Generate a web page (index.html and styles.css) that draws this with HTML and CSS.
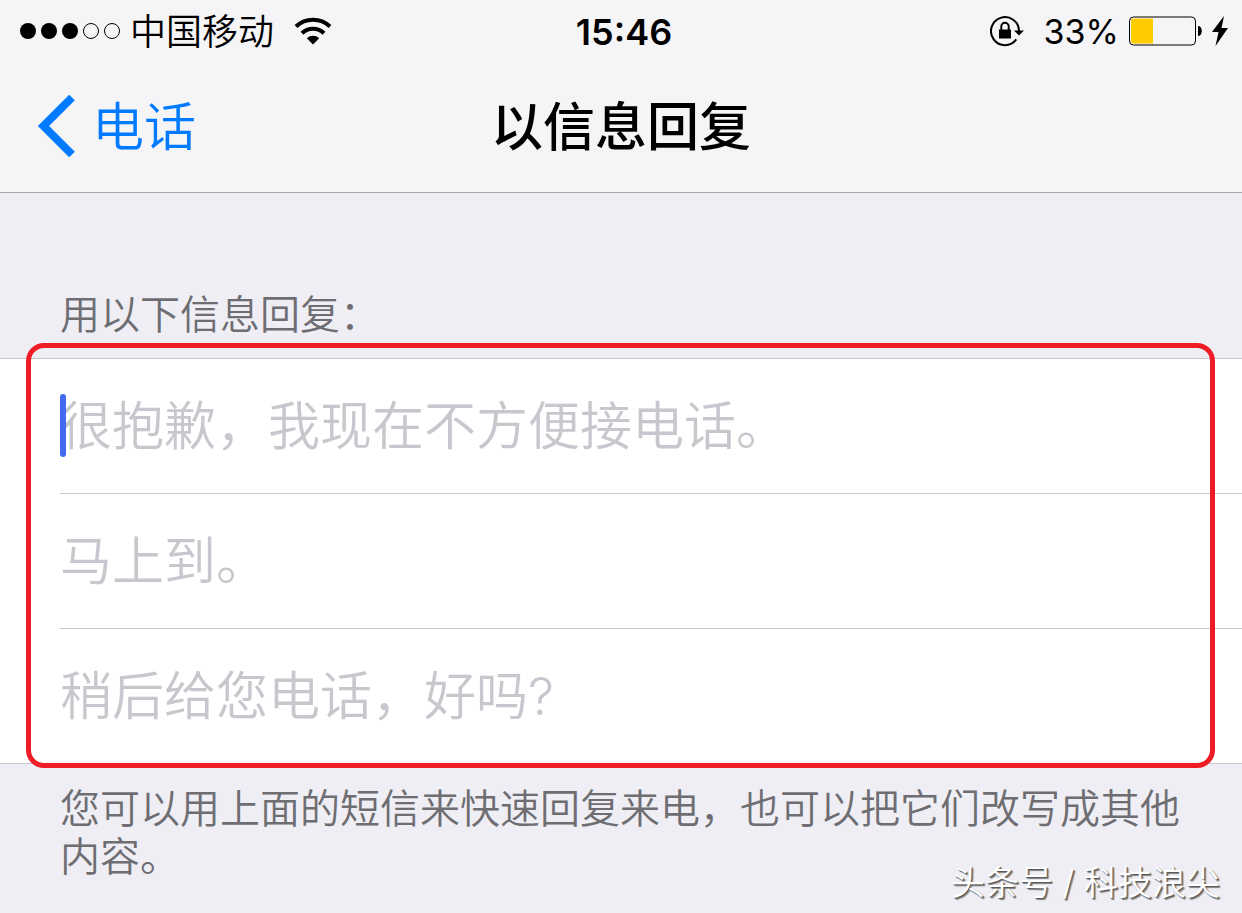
FILE: index.html
```html
<!DOCTYPE html>
<html lang="zh-CN">
<head>
    <meta charset="UTF-8">
    <meta name="viewport" content="width=device-width, initial-scale=1.0">
    <title>以信息回复</title>
    <link rel="stylesheet" href="styles.css">
</head>
<body>
    <header class="top">
        <div class="status-bar">
            <div class="status-left">
                <svg class="signal" width="101" height="18" viewBox="0 0 101 18" aria-hidden="true">
                    <circle cx="8" cy="9" r="8"/>
                    <circle cx="29" cy="9" r="8"/>
                    <circle cx="50" cy="9" r="8"/>
                    <circle cx="71" cy="9" r="7.5" fill="none" stroke="#000"/>
                    <circle cx="92" cy="9" r="7.5" fill="none" stroke="#000"/>
                </svg>
                <span class="carrier">中国移动</span>
                <svg class="wifi" width="38" height="28" viewBox="0 0 38 28" fill="none" stroke="#000" stroke-width="4" aria-hidden="true">
                    <path d="M2 9.5A24.5 24.5 0 0 1 36 9.5"/>
                    <path d="M8 16.2A15.8 15.8 0 0 1 30 16.2"/>
                    <path d="M19 27.500L12.800 21.300A9 9 0 0 1 25.200 21.300Z" fill="#000" stroke="none"/>
                </svg>
            </div>
            <time class="clock">15:46</time>
            <div class="status-right">
                <svg class="lock" width="34" height="32" viewBox="0 0 34 32" aria-hidden="true">
                    <path d="M26.300 24.400A14 14 0 1 1 29 16" fill="none" stroke="#000" stroke-width="2"/>
                    <path d="M24 15.500H34L29 20.500Z"/>
                    <rect x="9" y="14.500" width="12" height="9"/>
                    <path d="M11.300 15V11.500A3.700 3.700 0 0 1 18.700 11.500V15" fill="none" stroke="#000" stroke-width="2"/>
                </svg>
                <span class="percent">33%</span>
                <svg class="battery" width="73" height="30" viewBox="0 0 73 30" aria-hidden="true">
                    <rect x="0.500" y="1" width="66" height="28" rx="4" fill="none" stroke="#000"/>
                    <path d="M4 2.500H24V27.500H4A2 2 0 0 1 2 25.500V4.500A2 2 0 0 1 4 2.500Z" fill="#fc0"/>
                    <path d="M69 10C74 10 74 20 69 20Z"/>
                </svg>
                <svg class="bolt" width="16" height="30" viewBox="0 0 16 30" aria-hidden="true">
                    <path d="M12 0L0 16H6.500L3.500 30L16 12H9.500Z"/>
                </svg>
            </div>
        </div>
        <nav class="nav-bar">
            <a class="back" href="#">
                <svg width="40" height="64" viewBox="0 0 40 64" fill="none" stroke="#007aff" stroke-width="8" aria-hidden="true">
                    <path d="M36 3.500L7.500 32L36 60.500"/>
                </svg>
                <span>电话</span>
            </a>
            <h1 class="title">以信息回复</h1>
        </nav>
    </header>

    <main class="content">
        <h2 class="group-title" id="group-title">用以下信息回复：</h2>
        <form class="replies" aria-labelledby="group-title">
            <div class="row">
                <input class="reply" type="text" aria-label="回复一" placeholder="很抱歉，我现在不方便接电话。">
                <span class="caret"></span>
            </div>
            <div class="row">
                <input class="reply" type="text" aria-label="回复二" placeholder="马上到。">
            </div>
            <div class="row">
                <input class="reply" type="text" aria-label="回复三" placeholder="稍后给您电话，好吗?">
            </div>
            <div class="highlight"></div>
        </form>
        <p class="group-note">您可以用上面的短信来快速回复来电，也可以把它们改写成其他内容。</p>
    </main>

    <div class="watermark">头条号 / 科技浪尖</div>
</body>
</html>
```
FILE: styles.css
```css
* {
    box-sizing: border-box;
}

body {
    margin: 0;
    position: relative;
    min-height: 100vh;
    background-color: #efeef4;
    color: #000;
    font-family: Inter, "Noto Sans CJK SC", sans-serif;
    font-weight: 350;
}

svg {
    display: block;
    flex: none;
}

/* status bar + navigation */
.top {
    background-color: #f5f5f7;
    border-bottom: 1px solid #a7a7ab;
}

.status-bar {
    display: grid;
    grid-template-columns: 1fr auto 1fr;
    align-items: center;
    height: 60px;
    padding: 0 14px 0 20px;
    font-size: 36px;
    line-height: 60px;
}

.status-left, .status-right {
    display: flex;
    align-items: center;
}

.status-right {
    justify-content: flex-end;
}

.carrier, .clock, .percent {
    padding-top: 2px;
}

.carrier {
    margin: 0 20px 0 9px;
}

.clock {
    font-weight: 600;
}

.percent {
    margin: 0 10px 0 20px;
    font-size: 34px;
    font-weight: 400;
}

.bolt {
    margin-left: 10px;
}

.nav-bar {
    display: grid;
    grid-template-columns: 1fr auto 1fr;
    align-items: center;
    height: 132px;
    padding: 0 36px;
    font-size: 52px;
    line-height: 76px;
}

.back {
    display: flex;
    align-items: center;
    gap: 16px;
    color: #007aff;
    text-decoration: none;
}

.back span, .title {
    padding-top: 4px;
}

.title {
    margin: 0;
    font-size: 52px;
    font-weight: 500;
}

/* settings group */
.content {
    padding-top: 98px;
}

.group-title, .group-note {
    margin: 0;
    padding: 0 60px;
    color: #6d6d72;
    font-size: 40px;
    font-weight: 350;
    line-height: 48px;
}

.group-title {
    padding-bottom: 19px;
}

.group-note {
    padding-top: 21px;
}

.replies {
    position: relative;
    background-color: #fff;
    border-top: 1px solid #c8c7cc;
    border-bottom: 1px solid #c8c7cc;
}

.row {
    position: relative;
    margin-left: 60px;
}

.row + .row {
    border-top: 1px solid #c8c7cc;
}

.reply {
    display: block;
    width: 100%;
    height: 134px;
    padding: 0;
    border: none;
    outline: none;
    background: none;
    caret-color: #426bf2;
    font-family: inherit;
    font-size: 52px;
    font-weight: 350;
}

.reply::placeholder {
    color: #c7c7cd;
    opacity: 1;
}

.caret {
    position: absolute;
    top: 35px;
    left: 0;
    width: 6px;
    height: 63px;
    border-radius: 3px;
    background-color: #426bf2;
}

.highlight {
    position: absolute;
    top: -16px;
    right: 27px;
    bottom: -5px;
    left: 26px;
    border: 5px solid #ee1c25;
    border-radius: 18px;
    pointer-events: none;
}

.watermark {
    position: absolute;
    right: 22px;
    bottom: 6px;
    color: #fff;
    font-size: 34px;
    line-height: 48px;
    text-shadow: 1px 1px 1px #555, 2px 2px 1px #888;
}
```
